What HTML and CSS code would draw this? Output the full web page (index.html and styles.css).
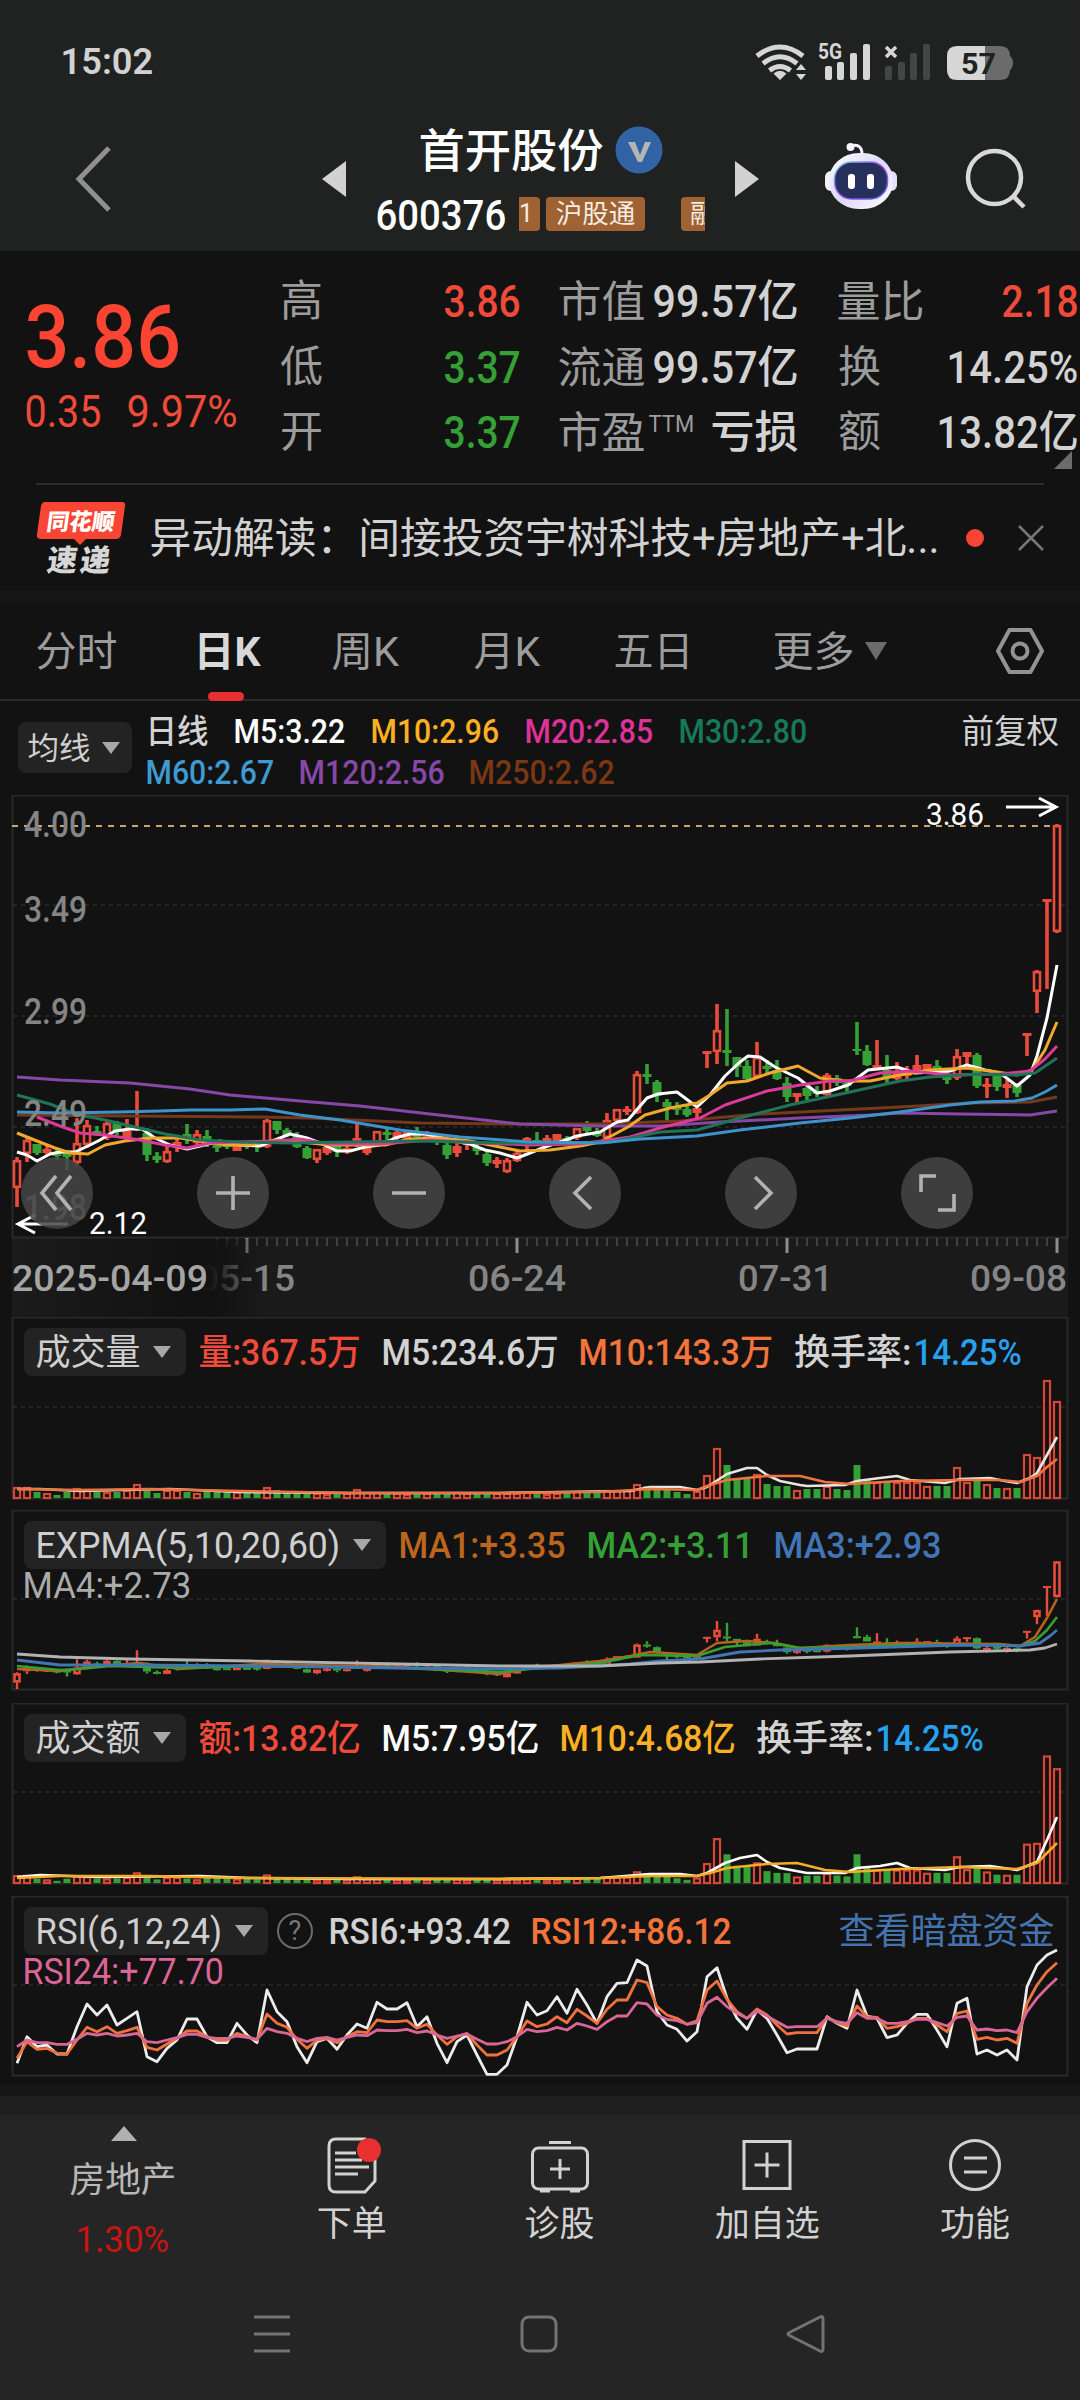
FILE: index.html
```html
<!DOCTYPE html>
<html lang="zh-CN">
<head>
<meta charset="utf-8">
<title>首开股份 600376</title>
<link rel="stylesheet" href="styles.css">
</head>
<body>
<div class="screen">
  <header class="top">
    <div class="status">
      <span class="clock" data-w="93">15:02</span>
      <svg class="status-icons" viewBox="750 36 270 52">
        <g fill="none" stroke="#d6d6d6" stroke-width="5">
          <path d="M757 56Q780 38 803 56"/><path d="M763 63.500Q780 50 797 63.500"/><path d="M769.500 70.500Q780 62.500 790.500 70.500"/>
        </g>
        <path fill="#d6d6d6" d="M773.500 73.500Q780 68 786.500 73.500L780 80ZM796 70l5-6 5 6zM796 74h10l-5 6z"/>
        <text class="net" x="818" y="59" textLength="24" lengthAdjust="spacingAndGlyphs">5G</text>
        <g fill="#d6d6d6"><rect x="825" y="66" width="7" height="14" rx="2"/><rect x="837" y="62" width="7" height="18" rx="2"/><rect x="850" y="53" width="7" height="27" rx="2"/><rect x="863" y="44" width="7" height="36" rx="2"/></g>
        <path stroke="#d6d6d6" stroke-width="3.500" d="M886 47l10 10M896 47l-10 10"/>
        <g fill="#444646"><rect x="885" y="66" width="7" height="14" rx="2"/><rect x="898" y="62" width="7" height="18" rx="2"/><rect x="910" y="53" width="7" height="27" rx="2"/><rect x="923" y="44" width="7" height="36" rx="2"/></g>
        <path fill="#6a6b6a" d="M985 46h15q10 0 10 10 3 2 3 7t-3 7q0 10-10 10h-15z"/>
        <path fill="#d6d6d6" d="M985 46v34h-28q-10 0-10-10V56q0-10 10-10z"/>
        <text class="bat" x="961" y="74" textLength="35" lengthAdjust="spacingAndGlyphs">57</text>
      </svg>
    </div>
    <div class="titlebar">
      <svg class="i-back" viewBox="0 0 44 72"><path d="M37 5L7 36l30 31" fill="none" stroke="#8f908f" stroke-width="5"/></svg>
      <svg class="i-prev" viewBox="0 0 24 36"><path fill="#d2d2d2" d="M24 0v36L0 18z"/></svg>
      <div class="title">
        <div class="title-name"><span data-w="185">首开股份</span><svg class="i-v" viewBox="0 0 48 48"><circle cx="24" cy="24" r="23.500" fill="#3163a5"/><path d="M13 16h7l5 13 5-13h6L27 36h-4z" fill="#b5b5b4"/></svg></div>
        <div class="title-code"><span data-w="131">600376</span><div class="tags"><span class="tag first">1</span><span class="tag">沪股通</span><span class="tag last">融</span></div></div>
      </div>
      <svg class="i-next" viewBox="0 0 24 36"><path fill="#d2d2d2" d="M0 0v36l24-18z"/></svg>
      <svg class="i-bot" viewBox="825 142 72 68">
        <defs><linearGradient id="shell" x1="0" y1="0" x2="1" y2="1"><stop offset="0" stop-color="#fff"/><stop offset=".5" stop-color="#dcd8f8"/><stop offset="1" stop-color="#fff"/></linearGradient>
        <linearGradient id="rim" x1="0" y1="0" x2="1" y2="1"><stop offset="0" stop-color="#7fe0f5"/><stop offset=".5" stop-color="#9a48e8"/><stop offset="1" stop-color="#5b6df0"/></linearGradient></defs>
        <path d="M850 146q12-3 12 8" fill="none" stroke="#f4f3ff" stroke-width="3"/><circle cx="850.500" cy="147" r="4" fill="#f4f3ff"/>
        <rect x="825" y="171" width="14" height="20" rx="6" fill="#f2f1fc"/><rect x="883" y="171" width="14" height="20" rx="6" fill="#e2dffb"/>
        <rect x="829" y="153" width="64" height="56" rx="30" ry="27" fill="url(#shell)"/>
        <rect x="834.500" y="162" width="53" height="37" rx="17" fill="#26305c" stroke="url(#rim)" stroke-width="1.500"/>
        <rect x="848" y="174" width="7" height="15" rx="3" fill="#fff"/><rect x="867" y="174" width="7" height="15" rx="3" fill="#fff"/>
      </svg>
      <svg class="i-search" viewBox="964 146 64 64"><g fill="none" stroke="#d9d9d9" stroke-width="4.500"><circle cx="994.500" cy="177.500" r="26.500"/><path d="M1013 196l11 11"/></g></svg>
    </div>
  </header>

  <section class="quote">
    <div class="price">
      <div class="price-now"><span data-w="157">3.86</span></div>
      <div class="price-chg"><span data-w="77">0.35</span><span data-w="111">9.97%</span></div>
    </div>
    <div class="stats">
      <label>高</label><b class="up" data-w="77">3.86</b><label data-w="88">市值</label><b data-w="146">99.57亿</b><label data-w="88">量比</label><b class="up" data-w="77">2.18</b>
      <label>低</label><b class="down" data-w="77">3.37</b><label data-w="88">流通</label><b data-w="146">99.57亿</b><label>换</label><b data-w="132">14.25%</b>
      <label>开</label><b class="down" data-w="77">3.37</b><label class="ttm"><span data-w="88">市盈</span><sup data-w="46">TTM</sup></label><b data-w="88">亏损</b><label>额</label><b data-w="142">13.82亿</b>
    </div>
    <i class="corner"></i>
  </section>

  <section class="news">
    <svg class="news-logo" viewBox="36 498 90 78">
      <path fill="#fb4534" d="M45 501h77q4 0 3 4l-4 29q-1 4-5 4h-30l-6 6-6-6H41q-5 0-4-5l4-28q1-4 4-4z"/>
      <g transform="skewX(-8)"><text class="logo-a" x="120" y="529" textLength="68" lengthAdjust="spacingAndGlyphs">同花顺</text><text class="logo-b" x="126" y="570" textLength="63" lengthAdjust="spacing">速递</text></g>
    </svg>
    <span class="news-text" data-w="790">异动解读：间接投资宇树科技+房地产+北...</span>
    <i class="dot"></i>
    <svg class="i-close" viewBox="0 0 26 26"><path d="M1 1l24 24M25 1L1 25" stroke="#777" stroke-width="2.500"/></svg>
  </section>

  <nav class="tabs">
    <span data-w="82">分时</span><span class="on" data-w="67">日K</span><span data-w="68">周K</span><span data-w="67">月K</span><span data-w="80">五日</span><span data-w="82">更多</span><i class="tri big"></i>
    <svg class="i-hex" viewBox="0 0 50 48"><g fill="none" stroke="#939393" stroke-width="4"><path d="M14.500 3h21L47 24 35.500 45h-21L3 24z" stroke-linejoin="round"/><circle cx="25" cy="24" r="7.500"/></g></svg>
  </nav>

  <section class="ma">
    <div class="pick small"><span data-w="63">均线</span><i class="tri"></i></div>
    <div class="ma-rows">
      <div class="ma-row"><span data-w="63">日线</span><span class="white" data-w="112">M5:3.22</span><span class="amber" data-w="129">M10:2.96</span><span class="pink" data-w="129">M20:2.85</span><span class="teal" data-w="129">M30:2.80</span></div>
      <div class="ma-row"><span class="sky" data-w="129">M60:2.67</span><span class="violet" data-w="146">M120:2.56</span><span class="rust" data-w="146">M250:2.62</span></div>
    </div>
    <span class="adjust" data-w="98">前复权</span>
  </section>

  <svg id="main" class="chart" viewBox="0 795 1080 522"></svg>

  <section class="panel">
    <svg id="vol" class="panel-chart" viewBox="0 1317 1080 183"></svg>
    <div class="legend"><div class="pick"><span data-w="105">成交量</span><i class="tri"></i></div><span class="up" data-w="162">量:367.5万</span><span data-w="177">M5:234.6万</span><span class="orange" data-w="195">M10:143.3万</span><span class="rate"><span data-w="118">换手率:</span><span class="azure" data-w="108">14.25%</span></span></div>
  </section>
  <section class="panel">
    <svg id="exp" class="panel-chart" viewBox="0 1510 1080 183"></svg>
    <div class="legend"><div class="pick"><span data-w="305">EXPMA(5,10,20,60)</span><i class="tri"></i></div><span class="brown" data-w="167">MA1:+3.35</span><span class="green" data-w="167">MA2:+3.11</span><span class="blue" data-w="168">MA3:+2.93</span></div>
    <div class="legend second"><span class="gray" data-w="169">MA4:+2.73</span></div>
  </section>
  <section class="panel">
    <svg id="amt" class="panel-chart" viewBox="0 1703 1080 183"></svg>
    <div class="legend"><div class="pick"><span data-w="105">成交额</span><i class="tri"></i></div><span class="up" data-w="162">额:13.82亿</span><span class="white" data-w="158">M5:7.95亿</span><span class="amber" data-w="176">M10:4.68亿</span><span class="rate"><span data-w="118">换手率:</span><span class="azure" data-w="108">14.25%</span></span></div>
  </section>
  <section class="panel">
    <svg id="rsi" class="panel-chart" viewBox="0 1896 1080 183"></svg>
    <div class="legend"><div class="pick"><span data-w="187">RSI(6,12,24)</span><i class="tri"></i></div><span class="help">?</span><span data-w="182">RSI6:+93.42</span><span class="orange" data-w="201">RSI12:+86.12</span><span class="link" data-w="216">查看暗盘资金</span></div>
    <div class="legend second"><span class="rose" data-w="201">RSI24:+77.70</span></div>
  </section>

  <div class="edge"></div>
  <footer>
    <div class="tools">
      <div class="tool sector"><i class="tri-up"></i><span data-w="107">房地产</span><span class="pct" data-w="94">1.30%</span></div>
      <div class="tool"><svg viewBox="-32 -32 64 64"><path d="M14-26h-30q-7 0-7 7v39q0 7 7 7H13L23 16V-8M-17-12H4M-17-5H10M-17 2H17M-17 9H6"/><circle cx="17" cy="-15" r="12" class="badge"/></svg><span>下单</span></div>
      <div class="tool"><svg viewBox="-32 -32 64 64"><rect x="-27.500" y="-17" width="55" height="41" rx="6"/><path d="M-11-22.500H11M0-6V14M-10 4H10M-20 26h10M10 26h10"/></svg><span>诊股</span></div>
      <div class="tool"><svg viewBox="-32 -32 64 64"><path d="M-23-23.500h46v47h-46zM0-12.500v25M-12.500 0h25"/></svg><span>加自选</span></div>
      <div class="tool"><svg viewBox="-32 -32 64 64"><circle r="24.500"/><path d="M-11-7H12M-11 7H12"/></svg><span>功能</span></div>
    </div>
    <div class="sysnav">
      <svg viewBox="0 0 40 40"><path d="M2 3h36M2 20h36M2 37h36"/></svg>
      <svg viewBox="0 0 40 40"><rect x="3" y="3" width="34" height="34" rx="7"/></svg>
      <svg viewBox="0 0 40 40"><path d="M3.500 18.500L34 3q3-1.500 3 2v30q0 3.500-3 2L3.500 21.500q-3-1.500 0-3z"/></svg>
    </div>
  </footer>
</div>
<script src="charts.js"></script>
</body>
</html>
```
FILE: styles.css
```css
* { box-sizing: border-box; }
body { margin: 0; background: #121212; }
.screen { width: 1080px; height: 2400px; overflow: hidden; display: flex; flex-direction: column; font-family: Roboto, "Noto Sans CJK SC", sans-serif; color: #d2d2d2; background: #121212; }
.screen > * { flex: none; }
svg { display: block; }
[data-w] { display: inline-block; white-space: nowrap; flex: none; }
[data-w] > .fit { display: inline-block; transform-origin: 0 50%; }
i { display: block; flex: none; }

.up { color: #f04a3a; }
.down { color: #35a035; }
.white { color: #fff; }
.amber { color: #fbb024; }
.pink { color: #dc3299; }
.teal { color: #167a58; }
.sky { color: #3f9ad2; }
.violet { color: #8648a6; }
.rust { color: #7a3713; }
.orange { color: #f4743c; }
.azure { color: #27a0ef; }
.brown { color: #bb651f; }
.green { color: #35a035; }
.blue { color: #4275b4; }
.gray { color: #aaa; }
.rose { color: #db6597; }

.top { height: 251px; background: #202221; }
.status { height: 88px; padding: 36px 60px 0 62px; display: flex; justify-content: space-between; }
.clock { font-size: 37px; font-weight: 600; line-height: 50px; }
.status-icons { width: 270px; height: 52px; }
.net { font-size: 22px; font-weight: 700; fill: #d6d6d6; }
.bat { font-size: 29px; font-weight: 700; fill: #202221; }
.titlebar { height: 163px; display: grid; grid-template-columns: 72px 44px 206px 24px 31px 359px 24px 65px 72px 67px 64px; }
.i-back { grid-column: 2; width: 44px; height: 72px; margin-top: 55px; }
.i-prev { grid-column: 4; width: 24px; height: 36px; margin-top: 73px; }
.i-next { grid-column: 7; width: 24px; height: 36px; margin-top: 73px; margin-left: -1px; }
.i-bot { grid-column: 9; width: 72px; height: 68px; margin-top: 54px; }
.i-search { grid-column: 11; width: 64px; height: 64px; margin-top: 58px; }
.title { grid-column: 6; }
.title-name { height: 68px; margin-top: 28px; padding-left: 43px; display: flex; align-items: center; gap: 10px; font-size: 46px; font-weight: 500; line-height: 68px; color: #fff; }
.i-v { width: 48px; height: 48px; }
.title-code { height: 60px; display: flex; align-items: center; gap: 11px; font-size: 43px; font-weight: 500; line-height: 60px; color: #fff; }
.tags { width: 186px; display: flex; overflow: hidden; }
.tag { flex: none; width: 99px; height: 34px; border-radius: 4px; background: #9f6232; color: #f5ece2; font-size: 26.500px; font-weight: 400; line-height: 34px; text-align: center; }
.tag.first { width: 31px; margin-left: -10px; margin-right: 6px; font-size: 25px; text-align: left; padding-left: 10px; }
.tag.last { margin-left: 36px; width: 50px; text-align: left; padding-left: 9px; }

.quote { height: 232px; display: flex; position: relative; }
.price { width: 280px; padding: 40px 0 0 26px; }
.price-now { height: 88px; font-size: 87px; font-weight: 500; line-height: 90px; color: #fc4432; }
.price-chg { height: 64px; display: flex; gap: 25px; font-size: 44px; line-height: 64px; color: #f04a3a; }
.stats { width: 800px; padding-top: 17px; display: grid; grid-template-columns: 87px 155px 37px 96px 145px 38px 88px 154px; grid-auto-rows: 65.500px; line-height: 66px; }
.stats label { font-size: 43px; color: #9c9c9c; }
.stats b { font-size: 44px; font-weight: 500; justify-self: end; }
.stats > :nth-child(6n+1) { grid-column: 1; }
.stats > :nth-child(6n+2) { grid-column: 2; }
.stats > :nth-child(6n+3) { grid-column: 4; }
.stats > :nth-child(6n+4) { grid-column: 5; }
.stats > :nth-child(6n+5) { grid-column: 7; }
.stats > :nth-child(6n) { grid-column: 8; }
.stats .ttm { display: flex; gap: 3px; }
.ttm sup { font-size: 23px; line-height: 49px; vertical-align: top; }
.corner { position: absolute; left: 1054px; top: 200px; width: 0; height: 0; border-left: 18px solid transparent; border-bottom: 18px solid #6b6b6b; }

.news { height: 107px; margin: 0 36px; border-top: 2px solid #2d2d2d; display: flex; align-items: center; }
.news-logo { width: 90px; height: 78px; }
.logo-a { font-size: 23px; font-weight: 900; fill: #fff; }
.logo-b { font-size: 30px; font-weight: 900; fill: #d6d6d6; }
.news-text { margin-left: 25px; font-size: 42px; line-height: 101px; }
.dot { width: 18px; height: 18px; border-radius: 9px; background: #fb4534; margin-left: 25px; }
.i-close { width: 26px; height: 26px; margin-left: auto; }

.tabs { height: 111px; border-top: 13px solid #161616; border-bottom: 2px solid #2a2a2a; padding-left: 37px; display: flex; align-items: center; font-size: 41px; line-height: 91px; color: #9c9c9c; }
.tabs > span { margin-right: 74px; }
.tabs .on { font-weight: 700; color: #d8d8d8; position: relative; margin-left: 2px; margin-right: 71px; }
.tabs .on::after { content: ""; position: absolute; left: 13px; top: 86px; width: 36px; height: 9px; border-radius: 5px; background: #e83030; }
.tabs > span:nth-child(4) { margin-right: 73px; }
.tabs > span:nth-child(5) { margin-right: 79px; }
.tabs > span:nth-child(6) { margin-right: 9px; }
.i-hex { width: 50px; height: 48px; margin-left: auto; margin-right: 35px; }
.tri { width: 0; height: 0; border: solid transparent; border-width: 12px 9px 0; border-top-color: #a8a8a8; }
.tri.big { border-width: 18px 11px 0; border-top-color: #6b6b6b; }

.ma { height: 94px; display: flex; padding-left: 18px; }
.pick { height: 48px; padding: 0 15px 0 13px; display: flex; align-items: center; gap: 11px; background: #232323; border-radius: 8px; font-size: 36px; font-weight: 400; line-height: 49px; color: #cfcfcf; flex: none; }
.pick.small { width: 114px; height: 51px; margin-top: 21px; padding: 0 12px 0 11px; gap: 10px; font-size: 31px; line-height: 53px; }
.ma-rows { margin: 9px 0 0 15px; width: 816px; font-size: 33px; font-weight: 500; line-height: 41px; }
.ma-row { height: 41px; display: flex; gap: 25px; }
.ma-row:last-child { gap: 24px; }
.adjust { font-size: 32.500px; line-height: 42px; margin-top: 9px; }

.chart { width: 1080px; height: 522px; }
.chart text { font-size: 36px; font-weight: 500; fill: #858585; }
.chart .mark { font-size: 31px; font-weight: 400; fill: #fff; }
.chart .from { fill: #a5a5a5; }

.panel { height: 193px; display: grid; grid-template-rows: 59px 30px auto; }
.panel-chart { width: 1080px; height: 183px; grid-area: 1 / 1 / 4 / 2; }
.legend { grid-area: 1 / 1 / 2 / 2; display: flex; height: 48px; margin: 11px 24px 0; gap: 20.500px; font-size: 36px; font-weight: 500; line-height: 49px; }
.legend .pick { margin-right: -6.500px; }
.legend.second { grid-area: 2 / 1 / 3 / 2; margin: -5px 24px 0; line-height: 43px; font-weight: 400; }
.rate { display: flex; gap: 1px; }
.help { width: 36px; height: 36px; margin: 6px -4px 0 -5px; border: 2.500px solid #6b6b6b; border-radius: 50%; color: #777; font-size: 27px; font-weight: 400; line-height: 32px; text-align: center; }
.link { color: #4573ae; margin-left: auto; font-weight: 400; }

.edge { height: 31px; margin-top: -5px; border-top: 12px solid #161616; background: #1e1e1e; }
footer { height: 285px; background: #252525; }
.tools { display: flex; height: 160px; }
.tool { width: 207.700px; display: flex; flex-direction: column; align-items: center; padding-top: 18px; font-size: 35px; line-height: 55px; }
.tool svg { width: 64px; height: 64px; fill: none; stroke: #d2d2d2; stroke-width: 3; overflow: visible; }
.tool .badge { fill: #e83030; stroke: none; }
.sector { width: 248px; padding-top: 11px; color: #b8b8b8; }
.tri-up { width: 0; height: 0; border: solid transparent; border-width: 0 13px 15px; border-bottom-color: #b0b0b0; margin-bottom: 11px; }
.sector .pct { font-size: 36px; color: #c91414; margin-top: 5px; }
.sysnav { display: flex; padding: 39px 0 0 252px; gap: 227px; }
.sysnav svg { width: 40px; height: 40px; fill: none; stroke: #737373; stroke-width: 3; }
```
FILE: charts.js
```js
// Squeeze each label to its column width.
document.querySelectorAll('[data-w]').forEach(function (el) {
  var inner = document.createElement('span');
  inner.className = 'fit';
  inner.textContent = el.textContent;
  el.textContent = '';
  el.appendChild(inner);
  var w = Number(el.dataset.w);
  inner.style.transform = 'translate(-1.5px, .5px) scaleX(' + w / inner.offsetWidth + ')';
  el.style.width = w + 'px';
});

var RED = '#ea4c3b', GREEN = '#35a035';
// Daily candles: high, low, body top, body bottom (chart y); f = falling day.
var candles = `1157 1207 1160 1188|1137 1162 1140 1154|1144 1155 1144 1153 f|1144 1156 1149 1153|1148 1160 1152 1156 f|1150 1170 1152 1157 f|1118 1165 1143 1163|1120 1148 1125 1145|1126 1136 1131 1133 f|1120 1140 1123 1138|1121 1135 1123 1132 f|1119 1140 1131 1137|1091 1131 1127 1130|1128 1161 1133 1155 f|1152 1163 1156 1160 f|1145 1163 1151 1162|1135 1152 1142 1147|1124 1144 1134 1140 f|1130 1146 1134 1143|1130 1147 1136 1140 f|1142 1152 1145 1148 f|1142 1149 1145 1147 f|1142 1151 1144 1151|1142 1149 1144 1147 f|1141 1152 1143 1147 f|1119 1148 1120 1147|1121 1134 1121 1130 f|1128 1137 1130 1135 f|1132 1148 1135 1147 f|1146 1159 1148 1158 f|1149 1163 1149 1160|1142 1155 1147 1153|1143 1157 1146 1152 f|1144 1154 1148 1151|1122 1147 1138 1143|1143 1155 1146 1153|1131 1144 1131 1143|1127 1142 1132 1135 f|1130 1140 1132 1138|1131 1140 1132 1139|1127 1142 1133 1137 f|1131 1141 1134 1139|1137 1145 1139 1142 f|1141 1159 1145 1155 f|1142 1157 1146 1153|1140 1150 1142 1145|1143 1155 1147 1151 f|1150 1166 1154 1163 f|1157 1168 1160 1164|1158 1173 1160 1172|1151 1162 1153 1161|1137 1150 1138 1146|1132 1144 1140 1143 f|1135 1143 1138 1141|1134 1142 1134 1141|1136 1144 1138 1141 f|1128 1140 1128 1138|1121 1134 1127 1131 f|1128 1137 1132 1136 f|1113 1140 1120 1138|1109 1121 1109 1121|1106 1115 1109 1112|1071 1114 1074 1113|1064 1084 1074 1077 f|1080 1102 1082 1096 f|1099 1120 1102 1107 f|1102 1115 1106 1110 f|1106 1117 1109 1115 f|1108 1119 1108 1113|1051 1068 1051 1054|1004 1064 1030 1052|1009 1066 1050 1053 f|1057 1077 1057 1067 f|1060 1080 1066 1079 f|1042 1078 1057 1077|1060 1073 1066 1069 f|1060 1080 1070 1079 f|1077 1102 1083 1097 f|1093 1102 1093 1097|1085 1100 1088 1096 f|1086 1097 1091 1094 f|1073 1098 1075 1095|1075 1086 1078 1083 f|1080 1092 1083 1086 f|1022 1055 1049 1051 f|1045 1066 1051 1065 f|1040 1068 1065 1068|1055 1083 1070 1077 f|1062 1080 1073 1079|1066 1079 1071 1076|1055 1074 1065 1072|1064 1072 1064 1071|1060 1073 1066 1069 f|1071 1084 1074 1080 f|1049 1080 1056 1078|1052 1066 1052 1057|1053 1088 1055 1086 f|1078 1098 1084 1087|1074 1091 1076 1087 f|1080 1098 1084 1088|1083 1097 1085 1093 f|1033 1056 1033 1036|970 1013 971 992|899 989 899 902|824 933 825 932`
  .split('|').map(function (s) { var p = s.split(' '); return { h: +p[0], l: +p[1], t: +p[2], b: +p[3], c: p[4] ? GREEN : RED }; });

var volume = [11,11,6,5,3,6,10,9,6,6,6,8,14,7,5,8,8,6,5,7,7,6,6,6,5,11,8,6,5,5,5,4,5,5,9,6,6,6,5,4,5,5,5,5,6,5,5,5,5,5,5,6,6,4,5,5,7,6,6,8,8,8,14,12,8,8,6,4,7,23,50,33,20,19,24,14,12,12,8,9,9,12,9,8,33,18,16,16,16,16,16,12,12,12,31,16,20,14,10,10,10,44,41,118,97];

function X(i) { return 17 + 10 * i; }
function line(pts, color, w) { return '<polyline fill="none" stroke-linejoin="round" stroke="' + color + '" stroke-width="' + (w || 3) + '" points="' + pts + '"/>'; }
function box(y, h) { return '<rect x="12.5" y="' + (y + .5) + '" width="1055" height="' + h + '" fill="none" stroke="#292929" stroke-width="2"/>'; }
function dash(y) { return '<path d="M13 ' + y + 'H1067" stroke="#2b2b2b" stroke-width="1.6" stroke-dasharray="4 4"/>'; }
function drawCandles(map, w, s) {
  return candles.map(function (c, i) {
    var x = X(i), t = map(c.t), b = map(c.b), out = '<path stroke="' + c.c + '" stroke-width="' + s + '" d="M' + x + ' ' + map(c.h) + 'V' + t + 'M' + x + ' ' + b + 'V' + map(c.l) + '"/>';
    if (c.c === GREEN || b - t < s * 2) return out + '<rect x="' + (x - w / 2) + '" y="' + t + '" width="' + w + '" height="' + Math.max(b - t, 2) + '" fill="' + c.c + '"/>';
    return out + '<rect x="' + (x - w / 2 + 1.5) + '" y="' + (t + 1.2) + '" width="' + (w - 3) + '" height="' + (b - t - 2.4) + '" fill="#121212" stroke="' + c.c + '" stroke-width="2.6"/>';
  }).join('');
}
function drawBars(base, hs) {
  return hs.map(function (h, i) {
    var x = X(i), c = candles[i].c;
    if (c === GREEN) return '<rect x="' + (x - 3.5) + '" y="' + (base - h) + '" width="7" height="' + h + '" fill="' + c + '"/>';
    return '<rect x="' + (x - 3) + '" y="' + (base - h + 1) + '" width="6" height="' + Math.max(h - 1, 2) + '" fill="#121212" stroke="#d84636" stroke-width="2.2"/>';
  }).join('');
}
function label(x, y, w, s, cls) { return '<text x="' + x + '" y="' + y + '" textLength="' + w + '" lengthAdjust="spacingAndGlyphs"' + (cls ? ' class="' + cls + '"' : '') + '>' + s + '</text>'; }

// Main price chart
var m = '<defs><linearGradient id="fade"><stop offset="0" stop-color="#1b1b1b"/><stop offset=".35" stop-color="#161616"/><stop offset=".74" stop-color="#111"/><stop offset=".8" stop-color="#111" stop-opacity=".9"/><stop offset="1" stop-color="#111" stop-opacity="0"/></linearGradient></defs>';
m += '<rect x="12" y="1238" width="1056" height="79" fill="#1a1a1a"/>' + box(795, 442);
[905, 1016, 1127].forEach(function (y) { m += dash(y); });
m += '<path d="M12 826H1057" stroke="#c9a672" stroke-width="2" stroke-dasharray="6 6"/>';
m += drawCandles(function (y) { return y; }, 9, 3.6);
m += line('17,1115 130,1116 260,1117 310,1118 420,1123 520,1124 600,1124 680,1121 760,1114 840,1110 900,1107 970,1103 1030,1102 1057,1097', '#74391a');
m += line('17,1077 60,1080 130,1083 190,1089 230,1095 300,1101 360,1106 430,1114 520,1124 600,1126 660,1126 720,1122 800,1118 870,1115 900,1113 960,1114 1030,1115 1057,1111', '#8648a6');
m += line('17,1152 27,1155 37,1161 50,1154 60,1152 75,1152 90,1145 100,1140 115,1131 130,1129 142,1129 155,1138 170,1145 187,1149 200,1146 220,1141 240,1145 260,1146 275,1140 290,1134 307,1138 320,1143 337,1151 350,1151 365,1147 380,1145 395,1138 410,1134 425,1134 440,1137 455,1141 470,1144 485,1150 500,1153 517,1158 530,1153 545,1147 560,1142 577,1136 600,1132 617,1122 628,1120 647,1098 658,1094 677,1092 697,1107 710,1095 725,1076 740,1062 748,1056 760,1057 775,1067 798,1078 817,1093 830,1091 848,1085 868,1070 897,1067 915,1073 950,1071 967,1065 985,1070 1000,1073 1017,1086 1030,1075 1037,1056 1047,1018 1057,965', '#fff');
m += line('17,1133 37,1141 55,1148 70,1153 88,1154 105,1145 125,1141 150,1138 180,1138 200,1141 225,1145 250,1145 275,1140 300,1142 330,1145 360,1145 385,1145 410,1139 440,1138 470,1141 500,1147 520,1151 550,1150 580,1146 600,1142 628,1127 645,1115 670,1108 697,1103 710,1095 727,1083 747,1081 770,1073 798,1066 820,1078 845,1081 870,1081 900,1075 930,1070 967,1068 990,1071 1017,1075 1032,1070 1045,1050 1057,1022', '#f0a92c');
m += line('37,1117 60,1126 80,1133 105,1135 140,1140 165,1145 187,1148 210,1143 240,1142 275,1141 300,1139 330,1144 380,1144 430,1140 480,1143 530,1145 580,1144 630,1137 660,1128 700,1118 725,1105 767,1091 800,1085 830,1081 850,1081 880,1073 910,1071 950,1075 1000,1074 1030,1071 1045,1059 1057,1046', '#dc3a98');
m += line('17,1095 50,1104 75,1114 105,1120 135,1127 165,1134 200,1140 240,1142 290,1143 350,1142 420,1141 500,1143 560,1143 610,1142 630,1138 660,1132 697,1130 740,1118 790,1105 850,1092 900,1081 930,1077 980,1074 1015,1075 1035,1073 1057,1058', '#207358');
m += line('17,1112 60,1113 120,1112 160,1111 190,1110 230,1110 265,1109 300,1115 340,1120 400,1130 460,1137 530,1142 600,1143 640,1139 697,1136 740,1130 800,1123 850,1118 900,1112 950,1105 980,1102 1015,1101 1032,1098 1045,1092 1057,1085', '#3f93cc');
[['4.00', 837], ['3.49', 922], ['2.99', 1024], ['2.49', 1126], ['1.98', 1220]].forEach(function (a) { m += label(24, a[1], 63, a[0]); });
m += label(926, 825, 58, '3.86', 'mark') + '<path d="M1006 807H1055M1039 798L1056 807L1039 816" fill="none" stroke="#fff" stroke-width="3"/>';
m += label(89, 1234, 58, '2.12', 'mark') + '<path d="M68 1224H19M35 1215L18 1224L35 1233" fill="none" stroke="#fff" stroke-width="3"/>';
var icons = ['M-1-17L-15 0L-1 17M14-17L0 0L14 17', 'M-17 0H17M0-17V17', 'M-17 0H17', 'M6-16L-10 0L6 16', 'M-6-16L10 0L-6 16', 'M-16-1V-17H-1M17 1V17H1'];
icons.forEach(function (d, i) { m += '<g transform="translate(' + (57 + 176 * i) + ' 1193)"><circle r="36" fill="#464646" fill-opacity=".85"/><path d="' + d + '" fill="none" stroke="#b2b2b2" stroke-width="3.6"/></g>'; });
for (var i = 20; i < 105; i++) {
  var big = i % 27 === 23;
  m += '<path stroke="' + (big ? '#8d8d8d' : '#555') + '" stroke-width="' + (big ? 3 : 1.3) + '" d="M' + X(i) + ' 1238V' + (big ? 1253 : 1246) + '"/>';
}
m += label(198, 1291, 97, '05-15') + label(468, 1291, 98, '06-24') + label(738, 1291, 95, '07-31') + label(970, 1291, 97, '09-08');
m += '<rect x="12" y="1239" width="253" height="78" fill="url(#fade)"/>' + label(12, 1291, 196, '2025-04-09', 'from');
document.getElementById('main').innerHTML = m;

// Volume
document.getElementById('vol').innerHTML = box(1317, 181) + dash(1407) + drawBars(1498, volume) +
  line('17,1489 40,1489 80,1491 120,1490 170,1489 240,1492 350,1493 500,1493 560,1492 630,1491 650,1487 680,1487 697,1490 707,1487 727,1474 737,1471 747,1468 757,1468 767,1475 780,1481 800,1485 807,1486 845,1485 857,1481 880,1478 897,1476 910,1480 945,1483 960,1479 990,1478 1005,1481 1017,1483 1030,1478 1037,1473 1047,1455 1057,1437', '#e8e4e0', 2.6) +
  line('17,1489 80,1490 150,1489 240,1491 350,1493 500,1493 600,1492 650,1489 697,1490 707,1486 727,1480 767,1476 800,1476 825,1482 850,1484 900,1481 960,1480 1000,1480 1020,1482 1037,1476 1047,1467 1057,1459', '#ee743f', 2.6);

// EXPMA
document.getElementById('exp').innerHTML = box(1510, 179) + dash(1599) + drawCandles(function (y) { return 1561 + (y - 824) * .334; }, 8, 2.4) +
  line('17,1669 60,1671 90,1667 140,1663 180,1669 260,1664 400,1667 500,1674 530,1668 600,1661 630,1656 650,1652 697,1655 717,1643 747,1641 775,1643 800,1648 850,1645 900,1643 1000,1644 1020,1646 1035,1637 1047,1618 1057,1599', '#b7621f', 2.6) +
  line('17,1666 60,1670 80,1669 110,1666 180,1668 260,1666 400,1668 500,1672 530,1669 600,1663 640,1655 697,1656 725,1647 770,1643 800,1648 850,1647 900,1645 1000,1645 1020,1646 1035,1641 1047,1630 1057,1617', '#35a035', 2.6) +
  line('17,1660 60,1665 130,1665 250,1666 400,1668 500,1669 560,1668 630,1664 660,1661 700,1659 740,1652 780,1650 860,1648 960,1645 1020,1646 1040,1643 1050,1636 1057,1630', '#4275b4', 2.8) +
  line('17,1654 60,1657 130,1659 250,1661 400,1664 500,1666 600,1666 660,1663 700,1662 760,1659 850,1656 950,1652 1030,1650 1045,1648 1057,1644', '#b2b2b2', 2.8);

// Turnover = volume x price
var amount = volume.map(function (v, i) { return v * .307 * (3.86 - (candles[i].t - 824) * 1.74 / 383); });
document.getElementById('amt').innerHTML = box(1703, 180) + dash(1792) + drawBars(1883, amount) +
  line('17,1877 40,1875 100,1877 200,1876 250,1878 350,1879 500,1879 600,1878 650,1874 680,1874 697,1876 707,1873 725,1863 740,1858 757,1855 767,1862 780,1868 807,1873 845,1873 857,1868 880,1866 897,1863 910,1868 945,1870 960,1867 990,1866 1017,1870 1037,1862 1047,1840 1057,1817', '#fff', 2.6) +
  line('17,1878 60,1876 150,1876 240,1878 500,1879 600,1878 650,1876 697,1876 710,1873 727,1868 767,1864 797,1863 825,1870 850,1872 900,1869 960,1867 1017,1869 1037,1863 1047,1853 1057,1843', '#f5ac27', 2.6);

// RSI
var rsi = [
  ['#ececec', [1120,1040,1070,1065,1092,1092,1010,942,975,945,1005,985,965,1100,1115,1075,1050,987,987,1040,1058,1058,1000,1035,1058,900,965,995,1070,1118,1055,1045,1078,1035,1002,1015,937,957,957,938,1010,980,1060,1118,1055,1035,1095,1153,1153,1125,1040,937,975,962,920,970,898,945,1000,920,880,878,810,828,965,1005,1018,1053,1025,860,833,925,985,1018,960,985,1035,1088,1077,1077,1077,980,1000,1015,900,978,985,1043,1035,1000,973,973,1020,1070,940,925,1092,1080,1095,1080,1110,890,825,795,780]],
  ['#ef723d', [1105,1055,1078,1075,1090,1092,1050,1012,1025,1010,1030,1022,1012,1072,1080,1062,1045,1023,1023,1040,1050,1050,1030,1040,1050,972,1000,1012,1048,1075,1050,1045,1058,1040,1025,1028,990,995,995,992,1015,1003,1035,1063,1040,1030,1065,1095,1095,1080,1040,993,1010,1002,980,998,958,978,1000,958,930,930,870,878,950,975,985,1003,992,900,873,928,965,985,957,975,1005,1032,1028,1028,1028,982,998,1008,948,980,982,1015,1010,1000,985,985,1005,1025,970,963,1048,1042,1050,1045,1060,940,885,845,818]],
  ['#d86696', [1070,1050,1058,1058,1063,1063,1048,1030,1035,1030,1038,1035,1030,1055,1058,1050,1043,1033,1033,1042,1045,1045,1038,1042,1048,1015,1025,1030,1045,1055,1045,1042,1050,1042,1035,1037,1020,1022,1022,1018,1028,1023,1035,1045,1038,1032,1048,1062,1062,1055,1040,1018,1025,1022,1012,1020,1000,1008,1018,995,978,978,938,942,975,988,992,1003,998,940,922,950,970,985,963,978,995,1012,1010,1010,1010,985,995,1000,968,985,985,1000,1000,995,988,988,998,1008,982,978,1020,1017,1022,1020,1028,965,925,893,865]]
];
document.getElementById('rsi').innerHTML = box(1896, 179) + dash(1985) + rsi.map(function (r) {
  return line(r[1].map(function (v, i) { return X(i) + ',' + (1690 + v / 3).toFixed(1); }).join(' '), r[0], 2.8);
}).join('');
```
